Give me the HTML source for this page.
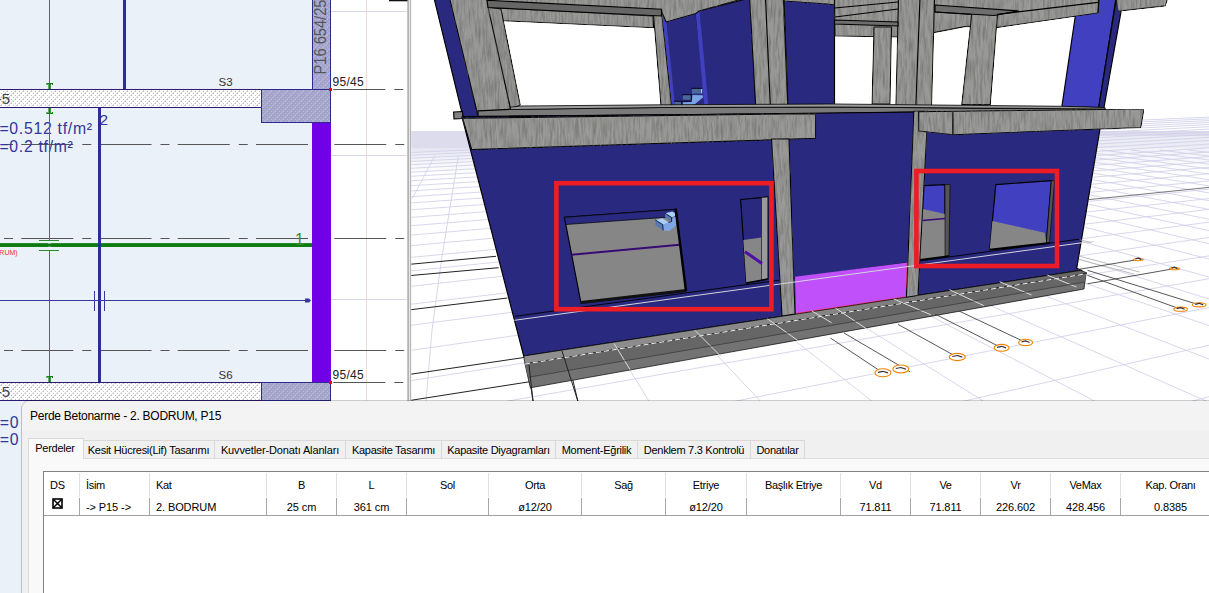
<!DOCTYPE html>
<html><head><meta charset="utf-8">
<style>
html,body{margin:0;padding:0;background:#fff;}
body{width:1209px;height:593px;overflow:hidden;position:relative;font-family:"Liberation Sans",sans-serif;}
#top{position:absolute;left:0;top:0;}
#dlg{position:absolute;left:22px;top:401px;width:1200px;height:200px;background:#f0f0f0;border-top-left-radius:8px;box-shadow:0 0 0 1px rgba(0,0,0,0.2);}
#ttl{position:absolute;left:8px;top:7.8px;font-size:12px;color:#000;white-space:nowrap;letter-spacing:-0.26px}
#tabpage{position:absolute;left:6px;top:57px;width:1200px;height:150px;background:#f9f9f9;border-top:1px solid #dcdcdc;border-left:1px solid #dcdcdc}
.tab{position:absolute;top:39px;height:18px;border:1px solid #d9d9d9;border-bottom:none;border-left:none;background:#f0f0f0;font-size:11px;line-height:19px;white-space:nowrap;color:#000;box-sizing:border-box;text-align:center;letter-spacing:-0.27px}
.tab.act{top:37px;height:21px;background:#f9f9f9;border-left:1px solid #d9d9d9;line-height:19px;z-index:2}
#tbl{position:absolute;left:21px;top:70px;width:1200px;height:140px;background:#fff;border-top:1px solid #828282;border-left:1px solid #828282}
.h,.c{position:absolute;font-size:11px;white-space:nowrap;color:#000;text-align:center;box-sizing:border-box}
.h{top:1px;height:24px;line-height:25px;border-right:1px solid #e0e0e0;letter-spacing:-0.3px}
.c{top:26px;height:17px;line-height:18.6px;border-right:1px solid #a8a8a8;letter-spacing:-0.1px}
.l{text-align:left;padding-left:6px}
#rowline{position:absolute;left:0;top:43px;width:1200px;height:1px;background:#a0a0a0}
</style></head><body>
<svg id="top" width="1209" height="593" viewBox="0 0 1209 593" font-family="Liberation Sans, sans-serif">
<defs>
<pattern id="hatch" width="8" height="8" patternUnits="userSpaceOnUse" patternTransform="translate(1,1)">
<rect width="8" height="8" fill="#fff"/>
<path d="M-1,9 L9,-1" stroke="#d4d4d4" stroke-width="0.9"/>
<rect x="0" y="0" width="1" height="1" fill="#bdbdbd"/><rect x="4" y="0" width="1" height="1" fill="#bdbdbd"/><rect x="2" y="2" width="1" height="1" fill="#bdbdbd"/><rect x="6" y="2" width="1" height="1" fill="#bdbdbd"/><rect x="0" y="4" width="1" height="1" fill="#bdbdbd"/><rect x="4" y="4" width="1" height="1" fill="#bdbdbd"/><rect x="2" y="6" width="1" height="1" fill="#bdbdbd"/><rect x="6" y="6" width="1" height="1" fill="#bdbdbd"/>
</pattern>
<pattern id="hatch2" width="8" height="8" patternUnits="userSpaceOnUse" patternTransform="translate(1,1)">
<rect width="8" height="8" fill="#a3a3ce"/>
<path d="M-1,9 L9,-1" stroke="#b7b7d6" stroke-width="0.9"/>
<rect x="0" y="0" width="1" height="1" fill="#b9b9c4"/><rect x="4" y="0" width="1" height="1" fill="#b9b9c4"/><rect x="2" y="2" width="1" height="1" fill="#b9b9c4"/><rect x="6" y="2" width="1" height="1" fill="#b9b9c4"/><rect x="0" y="4" width="1" height="1" fill="#b9b9c4"/><rect x="4" y="4" width="1" height="1" fill="#b9b9c4"/><rect x="2" y="6" width="1" height="1" fill="#b9b9c4"/><rect x="6" y="6" width="1" height="1" fill="#b9b9c4"/>
</pattern>
</defs>
<!-- LEFT CAD PANEL -->
<g id="cad">
<rect x="0" y="0" width="331" height="593" fill="#eaf1f8"/>
<rect x="331" y="0" width="77" height="401" fill="#fff"/>
<!-- faint guide lines -->
<g stroke="#d9d9ee" stroke-width="1"><path d="M331,11.5H407M331,155.5H407M331,299.5H407"/></g>
<path d="M366.5,0V401" stroke="#ecdcd4" stroke-width="1"/>
<!-- dashed axis lines -->
<g stroke="#555" stroke-width="1" stroke-dasharray="52 9 9 8.25" stroke-dashoffset="57">
<path d="M0,144.5H408"/><path d="M0,238.5H408"/><path d="M0,350.5H408"/><path d="M331,89.5H408" stroke-dashoffset="76"/><path d="M331,382.5H408" stroke-dashoffset="76"/>
</g>
<text x="-0.6" y="134.3" font-size="15.8" fill="#35359a" letter-spacing="0.72">=0.512 tf/m²</text>
<text x="-0.6" y="151.7" font-size="15.8" fill="#35359a" letter-spacing="0.7">=0.2 tf/m²</text>
<!-- green vertical -->
<path d="M49.5,0V382" stroke="#2c8c2c" stroke-width="1"/>
<g fill="#0f800f"><rect x="48.4" y="84" width="2.4" height="5.2"/><rect x="48.4" y="108" width="2.4" height="5"/><rect x="48.4" y="377" width="2.4" height="5.2"/></g>
<g stroke="#0f800f" stroke-width="1.2" fill="none"><path d="M47,85v-1.5h5.4v1.5M47,112v1.5h5.4v-1.5M47,378v-1.5h5.4v1.5"/></g>
<!-- navy verticals -->
<rect x="123" y="0" width="3" height="90" fill="#2c2c9c"/>
<rect x="98" y="107" width="3" height="276" fill="#2c2c9c"/>
<!-- green thick horizontal -->
<rect x="0" y="243.5" width="312" height="3.2" fill="#0c7c10"/>
<rect x="0" y="243.5" width="312" height="3.2" fill="#0c7c10"/>
<path d="M39,240.5H59M39,250.5H59" stroke="#2c8c2c" stroke-width="1"/>
<rect x="48" y="241" width="3" height="9" fill="#eaf1f8"/>
<rect x="0" y="243.5" width="312" height="3.2" fill="#0c7c10"/>
<rect x="98" y="240" width="3" height="10" fill="#2c2c9c"/>
<!-- thin navy horizontal -->
<path d="M0,300.5H308" stroke="#3838a0" stroke-width="1"/>
<path d="M94.5,291V311M104.5,291V311" stroke="#3838a0" stroke-width="1"/>
<path d="M305,298.5h4l2,2l-2,2h-4z" fill="#3838a0"/>
<!-- purple wall -->
<rect x="312" y="122" width="19" height="261" fill="#7000e6"/>
<!-- P16 wall -->
<rect x="312.5" y="-1" width="18" height="91" fill="url(#hatch2)" stroke="#2a2a90" stroke-width="1"/>
<!-- slabs -->
<rect x="-1" y="89.5" width="263" height="18" fill="url(#hatch)" stroke="#2d1a70" stroke-width="1"/>
<rect x="-1" y="382.5" width="263" height="18" fill="url(#hatch)" stroke="#2d1a70" stroke-width="1"/>
<rect x="261.5" y="89.5" width="69" height="33" fill="url(#hatch2)" stroke="#2a2a90" stroke-width="1"/>
<rect x="261.5" y="382.5" width="69" height="18" fill="url(#hatch2)" stroke="#2a2a90" stroke-width="1"/>
<rect x="329" y="88" width="3" height="3" fill="#f00"/><rect x="329" y="381" width="3" height="3" fill="#f00"/>
<!-- labels -->
<text transform="translate(326.3,74.5) rotate(-90)" font-size="16" fill="#555" textLength="75" lengthAdjust="spacingAndGlyphs">P16 654/25</text>
<text x="218.5" y="86" font-size="11.5" fill="#333">S3</text>
<text x="218.5" y="379" font-size="11.5" fill="#333">S6</text>
<text x="332.5" y="86" font-size="12" fill="#222" letter-spacing="0.3">95/45</text>
<text x="332.5" y="379" font-size="12" fill="#222" letter-spacing="0.3">95/45</text>
<text x="-3.2" y="103.7" font-size="15" fill="#444">-5</text>
<text x="-3.2" y="396.7" font-size="15" fill="#444">-5</text>
<text x="99.6" y="125.4" font-size="15.4" fill="#35359a">2</text>
<text x="295" y="244.5" font-size="16" fill="#3c8c1c">1</text>
<text x="-3" y="254.5" font-size="7" fill="#f03030">(RUM)</text>
<text x="-0.2" y="428.1" font-size="15.8" fill="#35359a" letter-spacing="0.72">=0</text>
<text x="-0.2" y="445.2" font-size="15.8" fill="#35359a" letter-spacing="0.72">=0</text>
</g>
<!-- splitter -->
<rect x="407.5" y="0" width="4" height="401" fill="#e8e8e8"/>
<rect x="407.5" y="0" width="1.2" height="401" fill="#9c9c9c"/><rect x="410.2" y="0" width="1.1" height="401" fill="#a8a8a8"/>
<rect x="389" y="0" width="18.5" height="1.3" fill="#111"/>
<!-- 3D VIEW -->
<g id="view3d">
<defs>
<clipPath id="vclip"><rect x="411.3" y="0" width="798" height="401"/></clipPath>
<clipPath id="gclip"><rect x="411.3" y="150" width="798" height="251"/></clipPath>
<linearGradient id="gnd" x1="0" y1="0" x2="0" y2="1">
<stop offset="0" stop-color="#e6e6f2"/><stop offset="0.5" stop-color="#f4f4fa"/><stop offset="1" stop-color="#ffffff"/>
</linearGradient>
<filter id="conc" x="0" y="0" width="100%" height="100%" color-interpolation-filters="sRGB">
<feTurbulence type="fractalNoise" baseFrequency="0.42 0.05" numOctaves="3" seed="7" result="n"/>
<feColorMatrix in="n" type="matrix" values="0 0 0 0 0  0 0 0 0 0  0 0 0 0 0  1.2 0 0 0 -0.47" result="a"/>
<feFlood flood-color="#5c5c5a"/><feComposite in2="a" operator="in" result="d"/>
<feColorMatrix in="n" type="matrix" values="0 0 0 0 0  0 0 0 0 0  0 0 0 0 0  0 -1.2 0 0 0.47" result="a2"/>
<feFlood flood-color="#bcbcba"/><feComposite in2="a2" operator="in" result="l"/>
<feMerge><feMergeNode in="SourceGraphic"/><feMergeNode in="d"/><feMergeNode in="l"/></feMerge>
<feComposite in2="SourceGraphic" operator="in"/>
</filter>
<linearGradient id="ftop" gradientUnits="userSpaceOnUse" x1="525" y1="0" x2="1086" y2="0"><stop offset="0" stop-color="#909090"/><stop offset="0.55" stop-color="#858585"/><stop offset="1" stop-color="#646464"/></linearGradient>
</defs>
<g clip-path="url(#vclip)">
<rect x="411" y="0" width="800" height="401" fill="#fff"/>
<!-- ground -->
<rect x="411" y="131" width="800" height="17" fill="#dcdcec"/>
<rect x="411" y="148" width="800" height="26" fill="url(#gnd)"/>
<rect x="1090" y="136" width="120" height="40" fill="#fff" opacity="0.45"/>
<g id="grid" stroke="#d0d0ea" stroke-width="0.85" fill="none">
<path d="M411,2063.0L1209,1279.9M411,1267.4L1209,795.7M411,924.5L1209,586.9M411,733.5L1209,470.7M411,611.7L1209,396.6M411,527.3L1209,345.2M411,465.4L1209,307.5M411,418.0L1209,278.7M411,380.6L1209,255.9M411,350.3L1209,237.5M411,325.3L1209,222.2M411,304.2L1209,209.4M411,286.3L1209,198.5M411,270.9L1209,189.1M411,257.4L1209,180.9M411,245.6L1209,173.7M411,235.1L1209,167.4M411,225.7L1209,161.7M411,217.4L1209,156.6M411,209.8L1209,151.9M411,202.9L1209,147.8M411,196.7L1209,144.0M411,190.9L1209,140.5M411,185.7L1209,137.3M411,180.8L1209,134.3M411,176.3L1209,131.6M411,172.2L1209,129.1M411,168.3L1209,126.7M411,164.7L1209,124.5M411,161.4L1209,122.5M411,158.2L1209,120.6M411,155.2L1209,118.8M411,152.5L1209,117.1"/>
<path d="M494.2,150L648.9,401M523.2,150L760.3,401M552.1,150L871.8,401M581.0,150L983.2,401M609.9,150L1094.6,401M638.9,150L1206.0,401M667.8,150L1317.5,401M696.7,150L1428.9,401M725.6,150L1540.3,401M754.6,150L1651.7,401M783.5,150L1763.2,401M812.4,150L1874.6,401M841.3,150L1986.0,401M870.3,150L2097.5,401M899.2,150L2208.9,401M928.1,150L2320.3,401M957.0,150L2431.7,401M986.0,150L2543.2,401M1014.9,150L2654.6,401M1043.8,150L2766.0,401M1072.7,150L2877.5,401M1101.7,150L2988.9,401M1130.6,150L3100.3,401M1159.5,150L3211.8,401M1188.4,150L3323.2,401M1217.4,150L3434.6,401M1246.3,150L3546.1,401M1275.2,150L3657.5,401M1304.1,150L3768.9,401M1333.1,150L3880.4,401M1362.0,150L3991.8,401M1390.9,150L4103.2,401M1419.9,150L4214.7,401M1448.8,150L4326.1,401M1477.7,150L4437.5,401M1506.6,150L4549.0,401M1535.6,150L4660.4,401M1564.5,150L4771.8,401M1593.4,150L4883.3,401M1622.3,150L4994.7,401"/>
<path d="M434.8,155.7L412.4,198.2M458.4,155.7L441.9,257.3L432,330L426,401"/>
</g>
<!-- black ground lines (left) -->
<g stroke="#222" stroke-width="1" fill="none">
<path d="M411,264.2L496,256.3M411,275.5L498.6,267.7M411,309.7L507.4,298M411,374.2L524,357.5M411,400.3L530.5,381.6"/>
<path d="M530,381L533,401M567.6,358L577.8,401"/>
</g>
<path d="M1089,199.6L1209,187.4" stroke="#777" stroke-width="1"/>

<!-- ===== upper storey ===== -->
<g stroke="#000" stroke-width="1.15" stroke-linejoin="round">
<!-- blue walls behind -->
<polygon points="434,-2 451,-2 478,116.3 463,117" fill="#29297f"/>
<polygon points="666,21 696,13 706,107 673,107" fill="#29297f"/>
<polygon points="699,11 750,-2 756,110 706,108" fill="#29297f"/>
<polygon points="784,0 834.5,0 834.5,108 788,110" fill="#29297f"/>
<polygon points="661.5,11 665.5,11 675,106 671,106" fill="#4040c0" stroke="none"/>
<polygon points="695.5,12 699.5,10 708.5,107 704.5,107" fill="#4040c0" stroke="none"/>
<!-- stairs -->
<g stroke="none"><polygon points="692.4,94.9 702.8,95.2 703.2,97.3 691.7,106.7 687,106.7 682.9,105.7 682.9,102.3 691.7,102" fill="#7aa4e4"/>
<rect x="692" y="88.8" width="8.6" height="4.8" fill="#4a6898"/><rect x="700.8" y="88.8" width="1.4" height="4.6" fill="#a0c8f8"/>
<rect x="682.9" y="95.2" width="7.9" height="4.5" fill="#4a6898"/><rect x="674.5" y="102" width="6.5" height="3.8" fill="#4a6898"/>
<path d="M691,88.3h11M682,94.6h10M674,101.2h17.5M681.6,102v4M691.3,95v5" stroke="#0a0a20" stroke-width="1" fill="none"/></g>
<!-- right bright blue wall -->
<polygon points="1078,-2 1116,-2 1098.7,107.5 1061.9,106.3" fill="#4040c0"/>
<polygon points="1115.7,2.4 1121,11.8 1104,107.5 1098.7,107.5" fill="#29297f"/>
</g>
<g filter="url(#conc)" stroke="#000" stroke-width="1.15" stroke-linejoin="round">
<!-- top slab/beam left -->
<polygon points="487,-2 750,-2 739,0 699,11 696,13.5 666,22 661.5,11 487,1" fill="#989896"/>
<polygon points="783,-2 835,-2 835,5 827,4 784.3,1" fill="#989896"/>
<polygon points="1116,-2 1167.7,-2 1165.3,5.9 1118,11.3" fill="#989896"/>
<polygon points="834.5,-2 1099,-2 1098,13 996.3,27.6 966.3,26.4 935,32.4 898,37 834.9,36" fill="#989896"/>
<polygon points="500,8 653,16 653.6,27.8 502.8,20.8" fill="#989896"/>
<!-- left big column -->
<polygon points="449.5,-2 488,-2 510.5,109 478,116" fill="#989896"/>
<polygon points="488,7 501,9 520.3,105 510.6,109" fill="#939391"/>
<!-- narrow column -->
<polygon points="653.6,16 661.5,11 671.5,106 661,106" fill="#989896"/>
<!-- mid big column -->
<polygon points="749.6,-2 783.3,-2 788,112 756,112" fill="#989896"/>
<!-- beams right of wall 2 -->
<!-- small column -->
<polygon points="874,27 891.5,27 890,104 872,104" fill="#989896"/>
<!-- big column 2 -->
<polygon points="898.5,-2 934.5,-2 931.6,107 895.8,107" fill="#989896"/>
<!-- column 3 -->
<polygon points="971.7,14 997.5,14 990.3,104.6 961.7,104.6" fill="#989896"/>
</g>
<g stroke="#000" stroke-width="1.15">
<polygon points="487,0.3 661.5,9.3 661.5,16 488,7.5" fill="#666"/>
<path d="M765.5,-2L770.6,112M920,-2L915.8,107" fill="none"/>
<polygon points="935,5 1019,11 994,15.5 935,12" fill="#6e6e6e"/>
<polygon points="834.5,20 898,22 898,26 834.5,24" fill="#6e6e6e"/>
<path d="M997.5,14.4L1098,2.4M835,17L898,9M834.5,8L898,2M935,12L972,14.5M1098,13L1099,-2" fill="none"/>
<!-- thin slab strip -->
<polygon points="478,110.9 510.5,109.3 661,107.5 835,107 1105,109 1105,111 918,112 816,113.6 478,116.4" fill="#7a7a7a"/>
<polygon points="510.5,107.2 521,106 661,104.8 835,104 1062,106.3 1105,107.5 1105,109 835,107 661,107.5 510.5,109.5" fill="#9c9c9c" stroke-width="0.8"/>
<polygon points="453.6,112 462.5,111.5 462.9,118.5 454,118.8" fill="#828282"/>
<path d="M463,117L816,113.9" stroke="#111" stroke-width="1.8" fill="none"/>
</g>

<!-- ===== lower storey ===== -->
<!-- blue wall -->
<polygon points="462,117 1105,110 1099.8,130 1076.7,268.4 1081,270.3 523.7,356" fill="#29297f" stroke="#000" stroke-width="1.15"/>
<path d="M515,316.3L1079,239.2" stroke="#000" stroke-width="0.9" fill="none"/>
<!-- window 1 -->
<polygon points="564.4,217.3 676,209.3 686,291 581,303" fill="#868686" stroke="#000" stroke-width="1.15"/>
<polygon points="564.4,217.3 676,209.3 677,216.5 565.8,224.5" fill="#29297f" stroke="#000" stroke-width="0.7"/>
<path d="M571.5,254.7L679.5,244.7" stroke="#370a74" stroke-width="2.1"/>
<path d="M581,302.5L686,290.5" stroke="#111" stroke-width="3" fill="none"/><path d="M686,291L675.6,208.5" stroke="#000" stroke-width="2.4" fill="none"/>
<g stroke="none"><polygon points="662.7,224.5 668.6,222.4 675,216.1 676.2,225.4 669.5,230.9 663.2,230.4" fill="#7ea6e6"/>
<polygon points="664.9,213.2 672.4,211.5 675,213.2 675,216.1 671.6,217.4" fill="#a8d0ff"/><polygon points="664.9,213.2 671.6,217.4 671.6,221.6 665.3,217.8" fill="#5878b0"/>
<polygon points="655.2,219.9 662.3,218.2 668.6,222.4 662.7,224.5" fill="#a8d0ff"/><polygon points="655.2,219.9 662.7,224.5 663.2,230.4 655.6,225.4" fill="#5878b0"/>
<path d="M655.2,219.9L662.7,224.5L663.2,230.4M664.9,213.2L671.6,217.4L671.6,221.6L668.6,222.4" stroke="#0a0a20" stroke-width="0.8" fill="none"/></g>
<!-- door 2 -->
<polygon points="740.6,199.5 767.8,197 767.8,279 746.3,283" fill="#29297f" stroke="#000" stroke-width="1.15"/>
<polygon points="743.3,240 761.5,237.5 761.5,280 746.3,283" fill="#868686"/>
<polygon points="761.5,197.5 767.8,197 767.8,279 761.5,280" fill="#9a9a9a" stroke="#000" stroke-width="0.5"/>
<path d="M745,251.7L762,263.5" stroke="#4c10a4" stroke-width="3"/>
<path d="M746.3,283L767.8,279" stroke="#000" stroke-width="1.5"/>
<!-- window 3 (left small, rect 2) -->
<polygon points="924,185.6 945,184.6 945,256.4 920,259.8" fill="#4040c0" stroke="#000" stroke-width="1.15"/>
<polygon points="923,209 945,214 945,256.4 920,259.8" fill="#868686"/>
<polygon points="945,184.6 950,184.6 949,256 945,256.4" fill="#555" stroke="#000" stroke-width="0.6"/>
<path d="M922.5,220.5L945,218.5" stroke="#3a0a78" stroke-width="1.3"/>
<path d="M920,259.8L949,256" stroke="#000" stroke-width="1.5"/>
<!-- window 4 (right, rect 2) -->
<polygon points="995.8,184.6 1051.4,180.6 1046.3,243 989.7,249.7" fill="#4040c0" stroke="#000" stroke-width="1.15"/>
<polygon points="992.4,221 1044.7,232.8 1046.3,243 989.7,249.7" fill="#868686"/>
<polygon points="1051.4,180.6 1054.5,180.6 1049.5,243 1046.3,243 " fill="#555" stroke="#000" stroke-width="0.6"/>
<path d="M989.7,249.7L1049.5,243" stroke="#000" stroke-width="1.8"/>
<!-- magenta -->
<polygon points="795,276.7 907.4,262.5 906.4,297 796,313.7" fill="#bf50fa"/>
<path d="M907.4,262.5L906.4,297L796,313.7" stroke="#ff3868" stroke-width="1.6" fill="none"/>
<!-- foundation -->
<polygon points="523.7,356 1081,270.3 1087,273 1086,273.8 525,364" fill="url(#ftop)" stroke="#000" stroke-width="0.7"/>
<polygon points="525,364 1086,273.8 1084,289 530.3,387.8" fill="#737373" stroke="#000" stroke-width="0.7"/>
<polygon points="525,364 1086,273.8 1085,282 528.2,377.3" fill="#666666"/>
<path d="M525,364L1086,273.8" stroke="#eee" stroke-width="1" stroke-dasharray="5 3"/>
<g stroke="#dcdcdc" stroke-width="1" fill="none"><path d="M614,343.4L630,369.5M695,330.4L721,356.5M767.4,318.8L797.8,340.5M811.8,310.9L831.6,322.8M835.6,308.2L867.3,329.4M893.8,299L930.9,314.8M949.4,289.7L983.8,305.6M999.7,281.8L1031.5,295M1047.3,275.1L1076.5,287"/></g>
<path d="M528.2,377.3L1085,282" stroke="#3c3c3c" stroke-width="0.8" fill="none"/>
<path d="M562,351L577.8,401M529,365L533,401" stroke="#222" stroke-width="1" fill="none"/>
<!-- floor band & columns (concrete) -->
<g filter="url(#conc)" stroke="#000" stroke-width="1.15" stroke-linejoin="round">
<polygon points="462.6,118.2 815.7,113.6 815.7,138.4 471.7,149.6" fill="#989896"/>
<polygon points="771.5,139 789,139 795,314 782,316" fill="#989896"/>
<polygon points="913.8,111 928,111 918,295.5 906.4,297.3" fill="#989896"/>
<polygon points="918.7,111.7 953,111.3 953,134.7 918.7,131" fill="#989896"/>
<polygon points="953,111.3 1144,109 1140.8,127.5 953,134.7" fill="#989896"/>
</g>
<!-- white line across wall -->
<path d="M514.4,320.3L1080,243L1094,241.5" stroke="#d4d4dc" stroke-width="1" fill="none"/>
<!-- red rectangles -->
<rect x="556.4" y="183.2" width="215" height="126" fill="none" stroke="#ee1c25" stroke-width="4.6"/>
<rect x="916.4" y="171" width="140.6" height="95" fill="none" stroke="#ee1c25" stroke-width="4.6"/>
<path d="M1078.8,256L1139.5,272M1078.8,259.5L1134.4,274.2M1080.5,240L1091.4,242.6" stroke="#b4b4b4" stroke-width="0.9" fill="none"/>
<!-- axis lines -->
<g stroke="#444" stroke-width="0.9" fill="none">
<path d="M830.4,338L882.9,372.8M844,333L910,371.8M898,324.4L957,357M935,314L1001.6,347.8M959,311L1025.6,342.4"/>
<path d="M1087.5,275.4L1180.6,309.2M1087.5,270.3L1199,304.8M1087.5,283.8L1174.5,268.6M1077.4,269.6L1138.3,259.5"/>
</g>
<g stroke="#f08000" stroke-width="1.1" fill="#fff">
<ellipse cx="882.9" cy="372.8" rx="8" ry="4"/><ellipse cx="900.8" cy="369" rx="8" ry="4"/><ellipse cx="957.3" cy="357" rx="8" ry="3.6"/><ellipse cx="1001.6" cy="347.8" rx="7.5" ry="3.4"/><ellipse cx="1025.6" cy="342.4" rx="7" ry="3.2"/>
<ellipse cx="1138.3" cy="259.6" rx="5" ry="1.1"/><ellipse cx="1174.5" cy="268.7" rx="5" ry="1.1"/><ellipse cx="1180.6" cy="309.2" rx="6.8" ry="2.1"/><ellipse cx="1199.2" cy="304.8" rx="6.8" ry="2.1"/>
</g>
<path d="M877.9,372.3l5.0,-1l5.0,1.6M895.8,368.5l5.0,-1l5.0,1.6M952.3,356.5l5.0,-1l5.0,1.6M997.1,347.3l4.5,-1l4.5,1.6M1021.6,341.9l4.0,-1l4.0,1.6M1135.3,259.0l3.0,-1l3.0,1.6M1171.5,268.1l3.0,-1l3.0,1.6M1176.6,308.7l4.0,-1l4.0,1.6M1195.2,304.3l4.0,-1l4.0,1.6" stroke="#333" stroke-width="1.2" fill="none"/>
</g>

</g><!--end3d-->
</svg>
<div id="dlg">
<div style="position:absolute;left:0;top:0;width:1200px;height:30px;background:#f3f3f3;border-top-left-radius:8px"></div>
<div id="ttl">Perde Betonarme - 2. BODRUM, P15</div>
<div id="tabpage"></div>
<div class="tab act" style="left:6px;width:56px;padding-right:2px">Perdeler</div>
<div class="tab" style="left:61px;width:132px">Kesit Hücresi(Lif) Tasarımı</div>
<div class="tab" style="left:193px;width:131px;letter-spacing:-0.14px">Kuvvetler-Donatı Alanları</div>
<div class="tab" style="left:324px;width:96px">Kapasite Tasarımı</div>
<div class="tab" style="left:420px;width:114px">Kapasite Diyagramları</div>
<div class="tab" style="left:534px;width:82px">Moment-Eğrilik</div>
<div class="tab" style="left:616px;width:113px">Denklem 7.3 Kontrolü</div>
<div class="tab" style="left:729px;width:54px">Donatılar</div>
<div id="tbl">
<div class="h l" style="left:0;width:36px">DS</div>
<div class="h l" style="left:36px;width:70px">İsim</div>
<div class="h l" style="left:106px;width:117px">Kat</div>
<div class="h" style="left:223px;width:70px">B</div>
<div class="h" style="left:293px;width:70px">L</div>
<div class="h" style="left:363px;width:82px">Sol</div>
<div class="h" style="left:445px;width:93px">Orta</div>
<div class="h" style="left:538px;width:84px">Sağ</div>
<div class="h" style="left:622px;width:81px">Etriye</div>
<div class="h" style="left:703px;width:94px">Başlık Etriye</div>
<div class="h" style="left:797px;width:70px">Vd</div>
<div class="h" style="left:867px;width:70px">Ve</div>
<div class="h" style="left:937px;width:70px">Vr</div>
<div class="h" style="left:1007px;width:70px">VeMax</div>
<div class="h" style="left:1077px;width:100px">Kap. Oranı</div>
<div class="c l" style="left:0;width:36px"><svg width="11" height="11" style="position:absolute;left:8px;top:0px"><rect x="1" y="1" width="9" height="9" fill="#fff" stroke="#000" stroke-width="1.6"/><path d="M1.5,1.5L9.5,9.5M9.5,1.5L1.5,9.5" stroke="#000" stroke-width="1.5"/></svg></div>
<div class="c l" style="left:36px;width:70px">-&gt; P15 -&gt;</div>
<div class="c l" style="left:106px;width:117px">2. BODRUM</div>
<div class="c" style="left:223px;width:70px">25 cm</div>
<div class="c" style="left:293px;width:70px">361 cm</div>
<div class="c" style="left:363px;width:82px"></div>
<div class="c" style="left:445px;width:93px">ø12/20</div>
<div class="c" style="left:538px;width:84px"></div>
<div class="c" style="left:622px;width:81px">ø12/20</div>
<div class="c" style="left:703px;width:94px"></div>
<div class="c" style="left:797px;width:70px">71.811</div>
<div class="c" style="left:867px;width:70px">71.811</div>
<div class="c" style="left:937px;width:70px">226.602</div>
<div class="c" style="left:1007px;width:70px">428.456</div>
<div class="c" style="left:1077px;width:100px">0.8385</div>
<div id="rowline"></div>
</div>
</div>
</body></html>
